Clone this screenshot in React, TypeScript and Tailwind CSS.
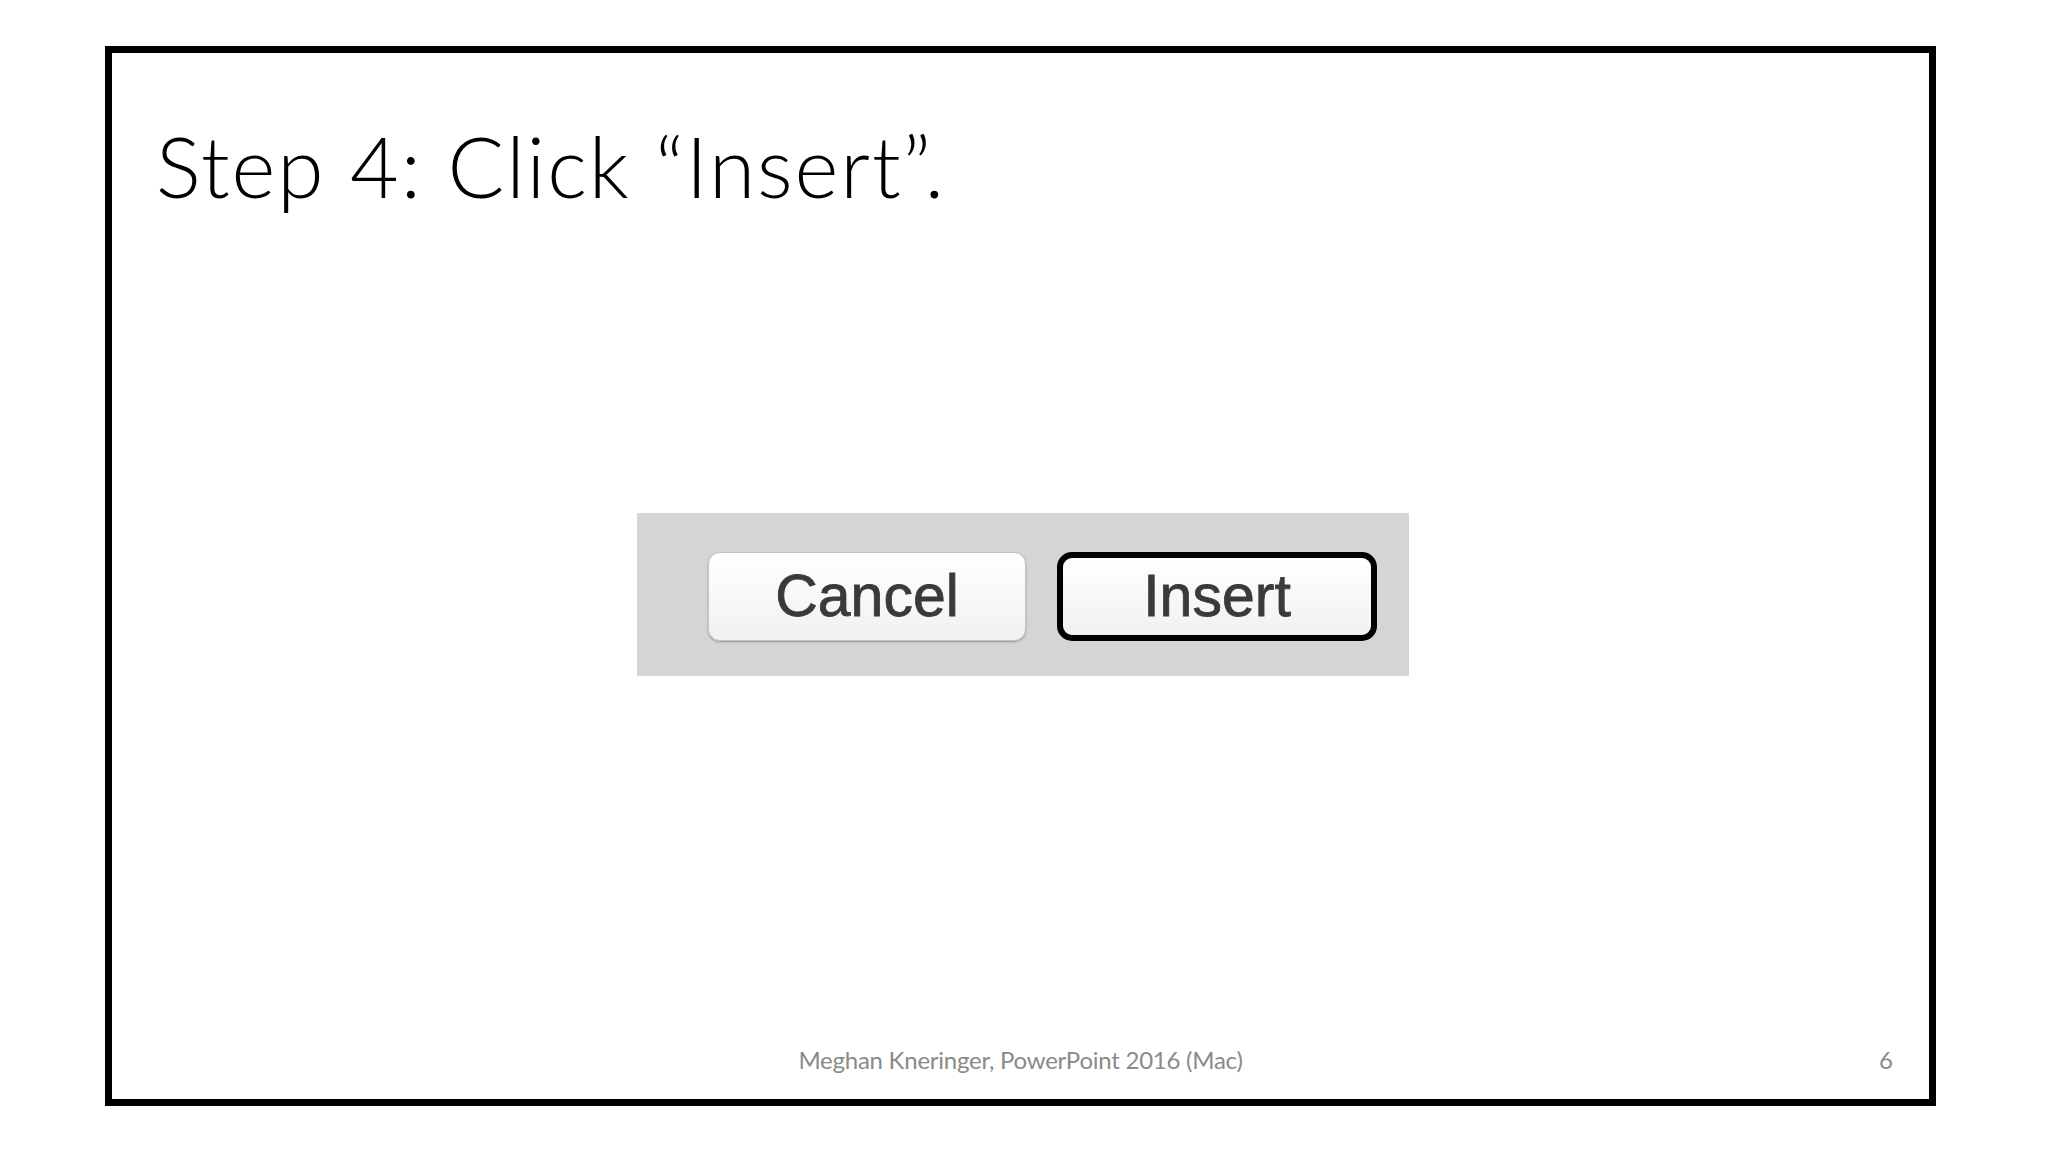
import React from "react";

export default function App() {
  return (
    <div className="w-[2048px] h-[1152px] bg-white overflow-hidden pt-[46px] pl-[105px]">
      <div className="w-[1831px] h-[1060px] border-[7px] border-black flex flex-col bg-white">
        <div
          className="mt-[71px] ml-[44px] h-[84px] leading-[84px] text-[84px] font-light text-black whitespace-nowrap tracking-[1.9px]"
          style={{ fontFamily: "Lato, 'Open Sans', sans-serif" }}
        >
          Step 4: Click “Insert”.
        </div>
        <div className="mt-[305px] ml-[525px] w-[772px] h-[163px] bg-[#d5d5d6] flex pl-[71px] pt-[39px] gap-[31px]">
          <div
            className="w-[318px] h-[89px] rounded-[12px] border border-[#c4c4c4] bg-gradient-to-b from-white to-[#f1f1f1] shadow-[0_1px_2px_rgba(0,0,0,0.3)] flex items-center justify-center text-[59px] leading-none text-[#3a3a3a] [-webkit-text-stroke:0.8px_#3a3a3a]"
            style={{ fontFamily: "'Liberation Sans', Arial, sans-serif" }}
          >
            Cancel
          </div>
          <div
            className="w-[320px] h-[89px] rounded-[15px] border-[6px] border-black bg-gradient-to-b from-white to-[#f1f1f1] flex items-center justify-center text-[59px] leading-none text-[#3a3a3a] [-webkit-text-stroke:0.8px_#3a3a3a]"
            style={{ fontFamily: "'Liberation Sans', Arial, sans-serif" }}
          >
            Insert
          </div>
        </div>
        <div className="flex-1" />
        <div
          className="grid grid-cols-[1fr_auto_1fr] pb-[24px] h-[54px] text-[24px] leading-[30px] text-[#8a8a8a]"
          style={{ fontFamily: "Lato, 'Open Sans', sans-serif" }}
        >
          <div />
          <div className="whitespace-nowrap tracking-[-0.25px]">Meghan Kneringer, PowerPoint 2016 (Mac)</div>
          <div className="text-right pr-[36px]">6</div>
        </div>
      </div>
    </div>
  );
}
